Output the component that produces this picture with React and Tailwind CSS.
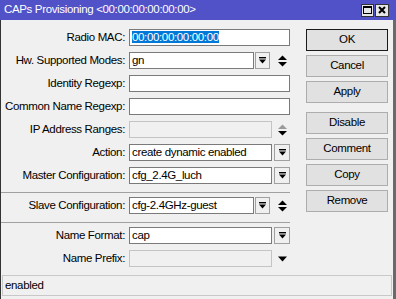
import React from 'react';

const DropBtn = ({ w = 'w-[16px]', ml = 'ml-[2px]' }) => (
  <div className={`${w} ${ml} h-[17px] border border-[#a0a0a0] bg-[#f0f0f0] flex items-center justify-center`}>
    <svg width="7" height="7" viewBox="0 0 7 7">
      <rect x="0" y="0" width="7" height="1.4" fill="#000" />
      <polygon points="0,2.6 7,2.6 3.5,6.6" fill="#000" />
    </svg>
  </div>
);

const UpDown = ({ dimTop = false, ml = 'ml-[8px]' }) => (
  <svg className={ml} width="9" height="12" viewBox="0 0 9 12">
    <polygon points="0,5 9,5 4.5,0.5" fill={dimTop ? '#9a9a9a' : '#000'} />
    <polygon points="0,7 9,7 4.5,11.5" fill="#000" />
  </svg>
);

const Input = ({ w, children, disabled }) => (
  <div
    className={`${w} h-[17px] border px-[2px] leading-[15px] whitespace-nowrap overflow-hidden ${
      disabled ? 'bg-[#f0f0f0] border-[#c4c4c4]' : 'bg-white border-[#7a7a7a]'
    }`}
  >
    {children}
  </div>
);

const Row = ({ label, children }) => (
  <div className="flex items-center h-[17px]">
    <div className="w-[124px] text-right whitespace-nowrap">{label}</div>
    <div className="ml-[4px] flex items-center">{children}</div>
  </div>
);

const Sep = () => <div className="h-px bg-[#a0a0a0] w-[289px] mt-[2px] mb-[-2px]" />;

const Btn = ({ children, primary }) => (
  <div
    className={`h-[22px] w-[82px] flex items-center justify-center border ${
      primary ? 'border-[#1a1a1a] bg-[#e1e1e1]' : 'border-[#adadad] bg-[#e1e1e1]'
    }`}
  >
    {children}
  </div>
);

export default function App() {
  return (
    <div className="w-[396px] h-[299px] bg-[#f0f0f0] flex flex-col overflow-hidden text-[11.5px] tracking-[-0.35px] text-black font-['Liberation_Sans',Arial,sans-serif]">
      {/* title bar */}
      <div className="h-[20px] bg-[#5151c8] flex items-center pl-[4px] pr-[7px] text-white">
        <span className="flex-1">CAPs Provisioning &lt;00:00:00:00:00:00&gt;</span>
        <div className="w-[13px] h-[13px] bg-[#e6e6e6] border border-[#333] flex items-center justify-center">
          <div className="w-[9px] h-[8px] border border-black border-t-2" />
        </div>
        <div className="ml-[1px] w-[14px] h-[13px] bg-[#e6e6e6] border border-[#333] flex items-center justify-center">
          <svg width="8" height="8" viewBox="0 0 8 8">
            <path d="M1 1 L7 7 M7 1 L1 7" stroke="#000" strokeWidth="2" />
          </svg>
        </div>
      </div>

      {/* body */}
      <div className="flex-1 flex flex-col border-l border-[#333] border-r-[3px] border-r-[#6a6a6a] pb-[3px]">
        <div className="flex-1 flex">
          <div className="w-[300px] flex flex-col gap-[6px] pt-[9px]">
            <Row label="Radio MAC:">
              <Input w="w-[161px]">
                <span className="bg-[#0078d7] text-white">00:00:00:00:00:00</span>
              </Input>
            </Row>
            <Row label="Hw. Supported Modes:">
              <Input w="w-[125px]">gn</Input>
              <DropBtn w="w-[15px]" ml="ml-[1px]" />
              <UpDown />
            </Row>
            <Row label="Identity Regexp:">
              <Input w="w-[161px]" />
            </Row>
            <Row label="Common Name Regexp:">
              <Input w="w-[161px]" />
            </Row>
            <Row label="IP Address Ranges:">
              <Input w="w-[143px]" disabled />
              <UpDown dimTop ml="ml-[6px]" />
            </Row>
            <Row label="Action:">
              <Input w="w-[143px]">create dynamic enabled</Input>
              <DropBtn />
            </Row>
            <Row label="Master Configuration:">
              <Input w="w-[143px]">cfg_2.4G_luch</Input>
              <DropBtn />
            </Row>
            <Sep />
            <Row label="Slave Configuration:">
              <Input w="w-[125px]">cfg-2.4GHz-guest</Input>
              <DropBtn w="w-[15px]" ml="ml-[1px]" />
              <UpDown />
            </Row>
            <Sep />
            <Row label="Name Format:">
              <Input w="w-[143px]">cap</Input>
              <DropBtn />
            </Row>
            <Row label="Name Prefix:">
              <Input w="w-[143px]" disabled />
              <svg className="ml-[6px]" width="9" height="6" viewBox="0 0 9 6">
                <polygon points="0,0.5 9,0.5 4.5,5.5" fill="#000" />
              </svg>
            </Row>
          </div>

          <div className="flex flex-col pt-[9px] ml-[5px]">
            <div className="flex flex-col gap-[4px]">
              <Btn primary>OK</Btn>
              <Btn>Cancel</Btn>
              <Btn>Apply</Btn>
            </div>
            <div className="flex flex-col gap-[4px] mt-[9px]">
              <Btn>Disable</Btn>
              <Btn>Comment</Btn>
              <Btn>Copy</Btn>
              <Btn>Remove</Btn>
            </div>
          </div>
        </div>

        <div className="h-[21px] mx-[1px] border border-[#c8c8c8] flex items-center pl-[2px]">enabled</div>
      </div>
    </div>
  );
}
